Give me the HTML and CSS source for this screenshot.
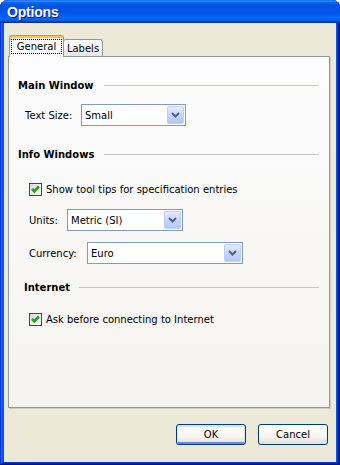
FILE: index.html
```html
<!DOCTYPE html>
<html lang="en">
<head>
  <meta charset="UTF-8">
  <meta name="viewport" content="width=device-width, initial-scale=1.0">
  <title>Options</title>
  <link rel="stylesheet" href="styles.css">
</head>
<body>
  <div class="window">
    <div class="titlebar">
      <span class="title">Options</span>
    </div>
    <div class="client">
      <div class="tabs">
        <div class="tab tab-active"><span class="focus">General</span></div>
        <div class="tab tab-labels">Labels</div>
      </div>

      <div class="panel">
        <div class="group-head head-main"><span>Main Window</span><i class="rule"></i></div>
        <div class="field field-size">
          <label class="field-label label-size">Text Size:</label>
          <div class="combo combo-size">
            <span class="combo-text">Small</span>
            <span class="drop"><svg width="9" height="6" viewBox="0 0 9 6"><path d="M1 1 L4.5 4.5 L8 1" fill="none" stroke="#4d6185" stroke-width="2"/></svg></span>
          </div>
        </div>

        <div class="group-head head-info"><span>Info Windows</span><i class="rule"></i></div>
        <div class="check check-tips">
          <span class="box"><svg width="11" height="11" viewBox="0 0 11 11"><path d="M2 4.8 L4.3 7.4 L8.9 2.5" fill="none" stroke="#21a121" stroke-width="2.6"/></svg></span>
          <span class="check-text">Show tool tips for specification entries</span>
        </div>
        <div class="field field-units">
          <label class="field-label label-units">Units:</label>
          <div class="combo combo-units">
            <span class="combo-text">Metric (SI)</span>
            <span class="drop"><svg width="9" height="6" viewBox="0 0 9 6"><path d="M1 1 L4.5 4.5 L8 1" fill="none" stroke="#4d6185" stroke-width="2"/></svg></span>
          </div>
        </div>
        <div class="field field-currency">
          <label class="field-label label-currency">Currency:</label>
          <div class="combo combo-currency">
            <span class="combo-text">Euro</span>
            <span class="drop"><svg width="9" height="6" viewBox="0 0 9 6"><path d="M1 1 L4.5 4.5 L8 1" fill="none" stroke="#4d6185" stroke-width="2"/></svg></span>
          </div>
        </div>

        <div class="group-head head-internet"><span>Internet</span><i class="rule"></i></div>
        <div class="check check-ask">
          <span class="box"><svg width="11" height="11" viewBox="0 0 11 11"><path d="M2 4.8 L4.3 7.4 L8.9 2.5" fill="none" stroke="#21a121" stroke-width="2.6"/></svg></span>
          <span class="check-text">Ask before connecting to Internet</span>
        </div>
      </div>

      <div class="buttons">
        <button class="btn btn-default">OK</button>
        <button class="btn">Cancel</button>
      </div>
    </div>
  </div>
</body>
</html>
```

FILE: styles.css
```css
body {
  margin: 0;
  background: #fff;
  font-family: "DejaVu Sans", sans-serif;
  font-size: 10px;
  color: #000;
}
.window {
  width: 340px;
  height: 465px;
  box-sizing: border-box;
  display: flex;
  flex-direction: column;
  background: #0a55e6;
  border-radius: 8px 8px 0 0;
  box-shadow: inset -1px -1px #00138c, inset 1px 1px #0831d9, inset -2px -2px #001ea0, inset 2px 2px #166aee, inset -3px -3px #003bda, inset 3px 3px #0855dd;
}
.titlebar {
  height: 23px;
  display: flex;
  align-items: center;
  padding-left: 7px;
  border-radius: 8px 8px 0 0;
  background: linear-gradient(to bottom, #0058ee 0%, #3a93ff 4%, #288eff 6%, #127dff 8%, #036ffc 10%, #0262ee 14%, #0057e5 20%, #0054e3 24%, #0055eb 56%, #005bf5 66%, #026afe 76%, #0062ef 86%, #0052d6 92%, #0040ab 94%, #003092 100%);
}
.title {
  font-family: "Liberation Sans", Arial, sans-serif;
  font-weight: bold;
  font-size: 14px;
  letter-spacing: -0.2px;
  color: #fff;
  text-shadow: 1px 1px #0f1089;
}
.client {
  flex: 1;
  display: flex;
  flex-direction: column;
  margin: 0 4px 3px 4px;
  padding: 12px 6px 0 4px;
  background: #ece9d8;
}

/* tabs */
.tabs {
  display: flex;
  align-items: flex-end;
  padding-left: 1px;
}
.tab {
  box-sizing: border-box;
  height: 17px;
  display: flex;
  align-items: center;
  justify-content: center;
  border: 1px solid #919b9c;
  border-bottom: none;
  border-radius: 3px 3px 0 0;
  background: linear-gradient(#fffffe, #f4f3ee 60%, #e8e6dc);
}
.tab-labels {
  width: 40px;
  margin-left: -1px;
}
.tab-active {
  position: relative;
  z-index: 1;
  width: 55px;
  height: 22px;
  margin-bottom: -1px;
  align-items: flex-start;
  padding: 3px 1px 0 1px;
  border-top-color: #e68b2c;
  background: #fcfcfe;
  box-shadow: inset 0 2px 0 #ffc83c;
}
.focus {
  box-sizing: border-box;
  width: 100%;
  height: 15px;
  display: flex;
  align-items: center;
  justify-content: center;
  border: 1px dotted #000;
}

/* panel */
.panel {
  flex: 1;
  display: flex;
  flex-direction: column;
  padding: 0 10px 0 9px;
  border: 1px solid #919b9c;
  background: linear-gradient(#fcfcfe, #f4f3ee);
  box-shadow: 1px 1px 0 #d0cebf;
}
.group-head {
  display: flex;
  align-items: center;
  height: 14px;
  font-weight: bold;
}
.rule {
  flex: 1;
  height: 1px;
  margin-left: 10px;
  background: #c9c7b8;
}
.head-main {
  margin-top: 21px;
}
.head-info {
  margin-top: 21px;
}
.head-internet {
  margin-top: 16px;
  padding-left: 6px;
}
.head-internet .rule {
  margin-left: 9px;
}

.field {
  display: flex;
  align-items: center;
  height: 22px;
}
.field-size {
  margin-top: 12px;
  padding-left: 7px;
}
.field-units {
  margin-top: 13px;
  padding-left: 11px;
}
.field-currency {
  margin-top: 11px;
  padding-left: 11px;
}
.field-label {
  flex-shrink: 0;
}
.label-size {
  width: 56px;
}
.label-units {
  width: 38px;
}
.label-currency {
  width: 58px;
}

.combo {
  box-sizing: border-box;
  height: 22px;
  display: flex;
  align-items: stretch;
  padding: 1px;
  border: 1px solid #7f9db9;
  background: #fff;
}
.combo-size {
  width: 105px;
}
.combo-units {
  width: 116px;
}
.combo-currency {
  width: 156px;
}
.combo-text {
  flex: 1;
  display: flex;
  align-items: center;
  padding-left: 2px;
}
.drop {
  box-sizing: border-box;
  width: 17px;
  display: flex;
  align-items: center;
  justify-content: center;
  border: 1px solid #bccff7;
  border-radius: 2px;
  background: linear-gradient(#e4ecfd, #c5d6fb 50%, #b3c8f6);
}

/* checkboxes */
.check {
  display: flex;
  align-items: center;
  height: 13px;
  padding-left: 11px;
}
.check-tips {
  margin-top: 22px;
}
.check-ask {
  margin-top: 19px;
}
.box {
  box-sizing: border-box;
  width: 13px;
  height: 13px;
  flex-shrink: 0;
  display: flex;
  border: 1px solid #1c5180;
  background: linear-gradient(135deg, #dcdcd7, #fff);
}
.check-text {
  margin-left: 4px;
  white-space: nowrap;
}

/* buttons */
.buttons {
  display: flex;
  justify-content: flex-end;
  gap: 12px;
  padding: 16px 2px 17px 0;
}
.btn {
  width: 70px;
  height: 21px;
  padding: 0;
  font-family: "DejaVu Sans", sans-serif;
  font-size: 10px;
  color: #000;
  border: 1px solid #003c74;
  border-radius: 3px;
  background: linear-gradient(#fff, #f5f4ef 60%, #e3e2d9);
}
.btn-default {
  box-shadow: inset 0 1px 0 1px #cee7ff, inset 0 -1px 0 1px #6982ee;
}
```
